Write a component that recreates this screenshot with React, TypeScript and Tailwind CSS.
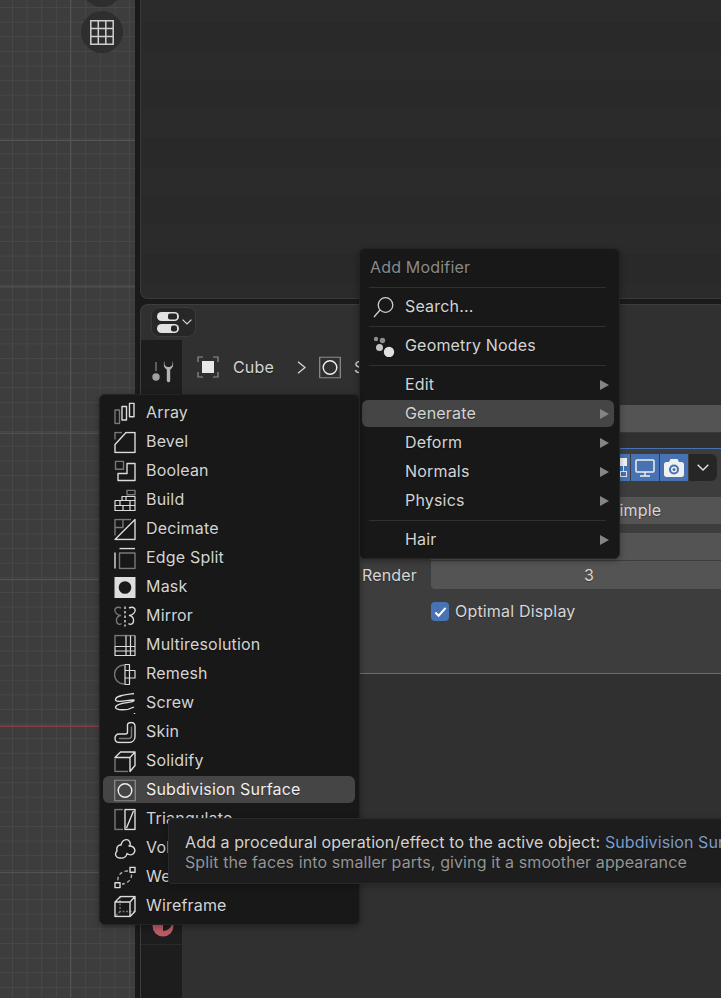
import type { ReactNode } from "react";

const W = "#dcdcdc";
const D = "#787878";

function Ico({ children }: { children: ReactNode }) {
  return (
    <svg viewBox="0 0 22 22" fill="none" stroke={W} strokeWidth="1.400" strokeLinejoin="round" className="h-[22px] w-[22px] shrink-0 translate-y-[0.5px]">
      {children}
    </svg>
  );
}

const modifierIcons: Record<string, ReactNode> = {
  Array: (
    <>
      <rect x="1" y="7.5" width="4.5" height="13.5" stroke={D} />
      <rect x="8" y="4" width="4.5" height="13.5" />
      <rect x="15.5" y="0.7" width="4.5" height="13.5" />
    </>
  ),
  Bevel: (
    <>
      <path d="M1 8V1h7" stroke={D} />
      <path d="M1 21v-8L12 1h9v20z" />
    </>
  ),
  Boolean: (
    <>
      <rect x="1.5" y="0.7" width="8" height="8" stroke={D} />
      <path d="M13 3h8v17H4v-7h9z" />
    </>
  ),
  Build: (
    <>
      <rect x="13" y="0.7" width="8" height="4.5" stroke={D} />
      <path d="M1 21V11h7V7h13v14zM1 16h20M8 11h13M6 11v5M12 7v4M16 11v5M9 16v5M16 16v5" strokeWidth="1.200" />
    </>
  ),
  Decimate: (
    <>
      <path d="M1 17V1h16M9 1v8H1" stroke={D} />
      <path d="M1 21 21 1v20z" />
    </>
  ),
  "Edge Split": (
    <>
      <rect x="5.5" y="5.5" width="15.5" height="15.5" stroke={D} />
      <path d="M1 5v16M5.5 1H21" />
    </>
  ),
  Mask: (
    <>
      <rect x="0.5" y="0.5" width="21" height="21" fill="#dedede" stroke="none" />
      <circle cx="11" cy="11" r="6.3" fill="#1a1a1a" stroke="none" />
    </>
  ),
  Mirror: (
    <>
      <path d="M7 2.500C4 1 1 2 .8 4.500.8 7.500 4 9.500 6.500 10 3.500 10.500 2 13 2.500 16c.6 3 3.500 3.500 5 2" stroke={D} />
      <path d="M11 1v20" strokeDasharray="2.500 2" />
      <path d="M15 2.500c3-1.500 6-.5 6.200 2 0 3-3.200 5-5.700 5.500 3 .5 4.500 3 4 6-.6 3-3.500 3.500-5 2" />
    </>
  ),
  Multiresolution: (
    <>
      <path d="M1 12V1h20" stroke={D} />
      <path d="M1 12h20M1 16.500h20M12 1v20M16.500 1v20M21 1v20H1V12" strokeWidth="1.200" />
    </>
  ),
  Remesh: (
    <>
      <path d="M10 1.500a9.500 9.500 0 0 0 0 19" stroke={D} />
      <path d="M11 1h4.500v6H21v7.500h-5.500V21H11zM11 7h4.500v7.500H11" strokeWidth="1.200" />
    </>
  ),
  Screw: (
    <>
      <path d="M20 1C13 2 1 3 1.500 7.500 2.500 11 15 7 20 7.500 21 11 3 9 1.500 14.500 1.500 18 13 18.500 20 14.500" />
      <path d="M20.500 20.500v1" />
    </>
  ),
  Skin: (
    <>
      <path d="M13.500 3.500C13.500 1.800 15 1 17 1c2.500 0 4 1.800 4 4v10c0 3.500-2.500 6-6 6H5c-2.500 0-4-1.800-4-4.200 0-2.500 1.500-4.300 4-4.300h6.500c1.300 0 2-.8 2-2z" />
      <path d="M17.500 5v9.500c0 1.500-1 2.500-3 2.500H5" stroke={D} />
    </>
  ),
  Solidify: (
    <>
      <path d="M1 8v13h13" stroke={D} strokeWidth="1.400" />
      <path d="M1 7 6.500 1.500H21V15l-5 6V7H1zM16 7l5-5.500" />
    </>
  ),
  "Subdivision Surface": (
    <>
      <rect x="0.700" y="0.700" width="20.600" height="20.600" stroke="#8a8a8a" strokeWidth="1.300" />
      <circle cx="11" cy="11" r="6.800" stroke="#eeeeee" strokeWidth="1.400" />
    </>
  ),
  Triangulate: (
    <>
      <path d="M9 1H1v20h8" stroke={D} />
      <path d="M11 1h10v20H11zM12.500 19.500l7-17" />
    </>
  ),
  "Volume to Mesh": (
    <path d="M6.500 20.500C2 21 0 16.500 3 13.500 2 9.500 4.500 7 7 7.500 8 2 14 0 16 5c.5 1.500 0 3-1 3.500 5-.5 7.500 4.500 4.500 7.500-1.500 1.800-4.500 1.500-6.500 0-.5 3.500-3.500 5-6.500 4.500z" />
  ),
  Weld: (
    <>
      <rect x="16" y="0.700" width="5" height="5" />
      <rect x="1" y="16.300" width="5" height="5" />
      <path d="M14 4.500C8 4 3 9 4 14.500M17.500 8c.5 5-4.500 9.500-9.500 9.500" stroke="#a8a8a8" strokeDasharray="3.500 2.500" />
    </>
  ),
  Wireframe: (
    <>
      <path d="M6 1v15h15M6 16l-5 5" stroke={D} strokeDasharray="2 1.500" />
      <path d="M1 6.500 6.500 1H21v15l-5 5H1zM1 6.500h15V21M16 6.500 21 1" />
    </>
  ),
};

const modifiers = [
  "Array",
  "Bevel",
  "Boolean",
  "Build",
  "Decimate",
  "Edge Split",
  "Mask",
  "Mirror",
  "Multiresolution",
  "Remesh",
  "Screw",
  "Skin",
  "Solidify",
  "Subdivision Surface",
  "Triangulate",
  "Volume to Mesh",
  "Weld",
  "Wireframe",
];

function SubmenuArrow() {
  return (
    <svg viewBox="0 0 9 10" className="h-[10px] w-[9px] shrink-0" fill="#858585">
      <path d="M0 0l9 5-9 5z" />
    </svg>
  );
}

function Sep() {
  return (
    <div className="flex h-[10px] items-center pl-[7px] pr-[8px]">
      <div className="h-px w-full bg-[#303030]" />
    </div>
  );
}

function AddMenu() {
  const items = ["Edit", "Generate", "Deform", "Normals", "Physics"];
  return (
    <div className="absolute left-[359px] top-[248px] flex h-[311px] w-[261px] flex-col rounded-md border border-[#242424] bg-[#181818] py-[4px] pl-[2px] pr-[5px] text-[#d4d4d4] shadow-[0_2px_6px_#0005]">
      <div className="flex h-[29px] shrink-0 items-center pb-[2px] pl-[8px] text-[#8a8a8a]">Add Modifier</div>
      <Sep />
      <div className="flex h-[29px] shrink-0 items-center gap-[10px] pl-[11px]">
        <svg viewBox="0 0 22 22" fill="none" stroke="#d0d0d0" strokeWidth="1.300" className="h-[22px] w-[22px]">
          <circle cx="12.500" cy="9" r="7.300" />
          <path d="M7 14l-6 7" />
        </svg>
        <span className="pb-[2px]">Search...</span>
      </div>
      <Sep />
      <div className="flex h-[29px] shrink-0 items-center gap-[10px] pl-[11px]">
        <svg viewBox="0 0 22 22" className="h-[22px] w-[22px]">
          <circle cx="3" cy="4" r="2.200" fill="#8c8c8c" />
          <circle cx="9.500" cy="5.500" r="2.700" fill="#8c8c8c" />
          <circle cx="6.500" cy="12.500" r="3.500" fill="#c4c4c4" />
          <circle cx="16" cy="17" r="5.200" fill="#e0e0e0" />
        </svg>
        <span className="pb-[2px]">Geometry Nodes</span>
      </div>
      <Sep />
      {items.map((item) => (
        <div
          key={item}
          className={`my-px flex h-[27px] shrink-0 items-center justify-between rounded-md pl-[43px] pr-[5px] ${
            item === "Generate" ? "bg-[#454545]" : ""
          }`}
        >
          <span className="pb-[2px]">{item}</span>
          <SubmenuArrow />
        </div>
      ))}
      <Sep />
      <div className="my-px flex h-[27px] shrink-0 items-center justify-between pl-[43px] pr-[5px]">
        <span className="pb-[2px]">Hair</span>
        <SubmenuArrow />
      </div>
    </div>
  );
}

function ModifierMenu() {
  return (
    <div className="absolute left-[99px] top-[394px] flex h-[531px] w-[261px] flex-col rounded-md border border-[#242424] bg-[#181818] px-[3px] py-[3px] text-[#d4d4d4] shadow-[0_2px_6px_#0005]">
      {modifiers.map((name) => {
        const active = name === "Subdivision Surface";
        return (
          <div
            key={name}
            className={`my-px flex h-[27px] w-[252px] shrink-0 items-center gap-[10px] rounded-md pl-[11px] ${
              active ? "bg-[#454545] text-[#efefef]" : ""
            }`}
          >
            <Ico>{modifierIcons[name]}</Ico>
            <span className="pb-[2px]">{name}</span>
          </div>
        );
      })}
    </div>
  );
}

function Tooltip() {
  return (
    <div className="absolute left-[168px] top-[818px] h-[66px] w-[640px] rounded border border-[#2a2a2a] bg-[#1d1d1d] px-[16px] pt-[13px] leading-[20px] tracking-[0.1px] whitespace-nowrap shadow-[0_2px_6px_#0004]">
      <div className="text-[#d2d2d2]">
        Add a procedural operation/effect to the active object: <span className="text-[#7d9cca]">Subdivision Surface</span>
      </div>
      <div className="text-[#949494]">Split the faces into smaller parts, giving it a smoother appearance</div>
    </div>
  );
}

function Viewport() {
  return (
    <div className="relative h-full w-[135px] shrink-0 overflow-hidden bg-[#3d3d3d]">
      <div className="absolute inset-0 bg-[linear-gradient(90deg,#545454_1px,transparent_1px),linear-gradient(#545454_1px,transparent_1px),linear-gradient(90deg,#474747_1px,transparent_1px),linear-gradient(#474747_1px,transparent_1px)] bg-[size:146.400px_146.400px,146.400px_146.400px,14.640px_14.640px,14.640px_14.640px] bg-[position:70px_140px,70px_140px,12px_7px,12px_7px]" />
      <div className="absolute left-0 right-0 top-[726px] h-px bg-[#8c3a46]" />
      {/* navigation gizmo buttons */}
      <div className="absolute left-[81px] top-[-35px] h-[42px] w-[42px] rounded-full bg-[#2e2e2e]" />
      <div className="absolute left-[81px] top-[11px] flex h-[42px] w-[42px] items-center justify-center rounded-full bg-[#2e2e2e]">
        <svg viewBox="0 0 24 25" fill="none" stroke="#cfcfcf" strokeWidth="1.500" className="h-[25px] w-[24px]">
          <path d="M.8.8h22.400v23.400H.8zM8.300.8v23.400M15.800.8v23.400M.8 8.500h22.400M.8 16.500h22.400" />
        </svg>
      </div>
    </div>
  );
}

function PropertiesContent() {
  return (
    <div className="min-w-0 flex-1 overflow-hidden">
      <div className="flex h-[54px] items-center pl-[15px] text-[#d4d4d4]">
        <svg viewBox="0 0 22 22" fill="none" stroke="#8f8f8f" strokeWidth="1.200" className="h-[22px] w-[22px]">
          <path d="M1 6V1h5M16 1h5v5M21 16v5h-5M6 21H1v-5" />
          <rect x="5" y="5" width="12" height="12" fill="#e8e8e8" stroke="none" />
        </svg>
        <span className="ml-[14px]">Cube</span>
        <svg viewBox="0 0 9 13" fill="none" stroke="#d4d4d4" strokeWidth="1.300" className="ml-[23px] h-[13px] w-[9px]">
          <path d="M1 .7l7 5.800-7 5.800" />
        </svg>
        <span className="ml-[13px]">
          <Ico>{modifierIcons["Subdivision Surface"]}</Ico>
        </span>
        <span className="ml-[13px]">Subdivision</span>
      </div>

      <div className="mt-[11px] ml-[4px] h-[28px] w-[700px] border-b border-[#383838] bg-[#545454]" />

      <div className="mt-[15px] h-[226px] w-[700px] border-y border-[#4772b3] bg-[#3d3d3d] pt-[5px] text-[#d6d6d6]">
        <div className="flex h-[27px] w-[535px] justify-end gap-px">
          <div className="relative h-[27px] w-[28px] bg-[#4772b3]">
            <div className="absolute left-[18px] top-[4px] h-[8px] w-[7px] bg-[#f0f0f0]" />
            <div className="absolute left-[21px] top-[12px] h-[5px] w-px bg-[#e0e0e0]" />
            <div className="absolute left-[18px] top-[17px] h-[6px] w-[7px] border border-[#dfe6f2]" />
          </div>
          <div className="flex h-[27px] w-[28px] items-center justify-center bg-[#4772b3]">
            <svg viewBox="0 0 20 18" fill="none" stroke="#f0f0f0" strokeWidth="1.500" className="h-[18px] w-[20px]">
              <rect x="1" y="1" width="18" height="12" rx="1" />
              <path d="M10 13v4M5 17h10" />
            </svg>
          </div>
          <div className="flex h-[27px] w-[28px] items-center justify-center bg-[#4772b3]">
            <svg viewBox="0 0 22 18" className="h-[18px] w-[22px]">
              <path d="M1 5.500C1 4 2 3 3.500 3H6l1.500-3h7L16 3h2.500C20 3 21 4 21 5.500V15.500C21 17 20 18 18.500 18h-15C2 18 1 17 1 15.500z" fill="#f0f0f0" />
              <circle cx="11" cy="10.500" r="5" fill="#4772b3" />
              <circle cx="11" cy="10.500" r="3" fill="#f0f0f0" />
              <circle cx="11" cy="10.500" r="1.500" fill="#4772b3" />
            </svg>
          </div>
          <div className="flex h-[27px] w-[28px] items-center justify-center rounded-r-md bg-[#262626]">
            <svg viewBox="0 0 12 7" fill="none" stroke="#e4e4e4" strokeWidth="1.400" className="h-[7px] w-[12px]">
              <path d="M.7.7 6 6l5.300-5.300" />
            </svg>
          </div>
        </div>

        <div className="mt-[16px] ml-[249px] flex h-[27px] w-[316px] items-center rounded-l bg-[#545454] pb-[2px] pl-[178px]">Simple</div>
        <div className="mt-[9px] ml-[249px] h-[27px] w-[316px] rounded-t bg-[#545454]" />
        <div className="mt-px flex h-[28px] items-center">
          <div className="w-[235px] text-right">Render</div>
          <div className="ml-[14px] flex h-[28px] w-[316px] items-center justify-center rounded-b bg-[#545454]">3</div>
        </div>
        <div className="mt-[13px] ml-[249px] flex h-[19px] items-center gap-[6px]">
          <div className="flex h-[19px] w-[18px] items-center justify-center rounded bg-[#4772b3]">
            <svg viewBox="0 0 14 12" fill="none" stroke="#ffffff" strokeWidth="2.200" className="h-[12px] w-[13px]">
              <path d="M1.500 6.500 5 10l7.500-8.500" />
            </svg>
          </div>
          <span className="pb-[2px]">Optimal Display</span>
        </div>
      </div>
    </div>
  );
}

function Properties() {
  return (
    <div className="flex min-h-0 flex-1 flex-col rounded-tl-lg border-l border-t border-[#3d3d3d] bg-[#303030]">
      <div className="flex h-[35px] shrink-0 items-start pl-[10px] pt-[2px]">
        <div className="flex h-[30px] w-[45px] items-center gap-[3px] rounded-lg border border-[#3a3a3a] bg-[#272727] pl-[5px]">
          <svg viewBox="0 0 22 21" className="h-[21px] w-[22px] shrink-0">
            <rect x="0" y="0" width="22" height="9" rx="4.500" fill="#e2e2e2" />
            <rect x="11" y="1.500" width="9" height="6" rx="2" fill="#272727" />
            <rect x="0" y="12" width="22" height="9" rx="4.500" fill="#e2e2e2" />
            <rect x="14" y="13.500" width="6" height="6" rx="2" fill="#272727" />
          </svg>
          <svg viewBox="0 0 10 6" fill="none" stroke="#d8d8d8" strokeWidth="1.200" className="h-[6px] w-[10px] shrink-0">
            <path d="M.6.6 5 5 9.400.6" />
          </svg>
        </div>
      </div>
      <div className="flex min-h-0 flex-1">
        <div className="flex w-[41px] shrink-0 flex-col items-center bg-[#1d1d1d]">
          <svg viewBox="0 0 26 24" className="mt-[19px] h-[24px] w-[26px]">
            <path d="M7 3v9" stroke="#a0a0a0" strokeWidth="1" />
            <circle cx="7" cy="18" r="3.700" fill="#a0a0a0" />
            <path d="M15.500 2C14 5.500 15 9 17.800 10.500V21.500a1.600 1.600 0 0 0 3.400 0V10.500C24 9 25 5.500 23.500 2V5.500c-.7 2-2.800 2.500-4 2.500s-3.300-.5-4-2.500z" fill="#b4b4b4" />
          </svg>
          <div className="mt-auto mb-[53px] h-px w-full bg-[#2a2a2a]" />
        </div>
        <PropertiesContent />
      </div>
    </div>
  );
}

export default function App() {
  return (
    <div className="relative flex h-[998px] w-[721px] overflow-hidden bg-[#1a1a1a] font-['Inter',sans-serif] text-[16px] tracking-[0.18px] [text-shadow:0_1px_1px_#0005]">
      <Viewport />
      <div className="ml-[5px] flex min-w-0 flex-1 flex-col">
        <div className="h-[299px] shrink-0 rounded-bl-lg border-b border-l border-[#3a3a3a] bg-[repeating-linear-gradient(180deg,#2b2b2b_-7px,#2b2b2b_22px,#292929_22px,#292929_51px)]" />
        <div className="h-[5px] shrink-0" />
        <Properties />
      </div>

      {/* icon at the foot of the tab column, mostly under the menu */}
      <svg viewBox="0 0 22 22" className="absolute left-[152px] top-[915px] h-[22px] w-[22px]">
        <circle cx="11" cy="11" r="10.500" fill="#b85c64" />
        <path d="M11 8v8c4 0 8-3 9.500-8z" fill="#1d1d1d" />
      </svg>

      <AddMenu />
      <ModifierMenu />
      <Tooltip />
    </div>
  );
}
